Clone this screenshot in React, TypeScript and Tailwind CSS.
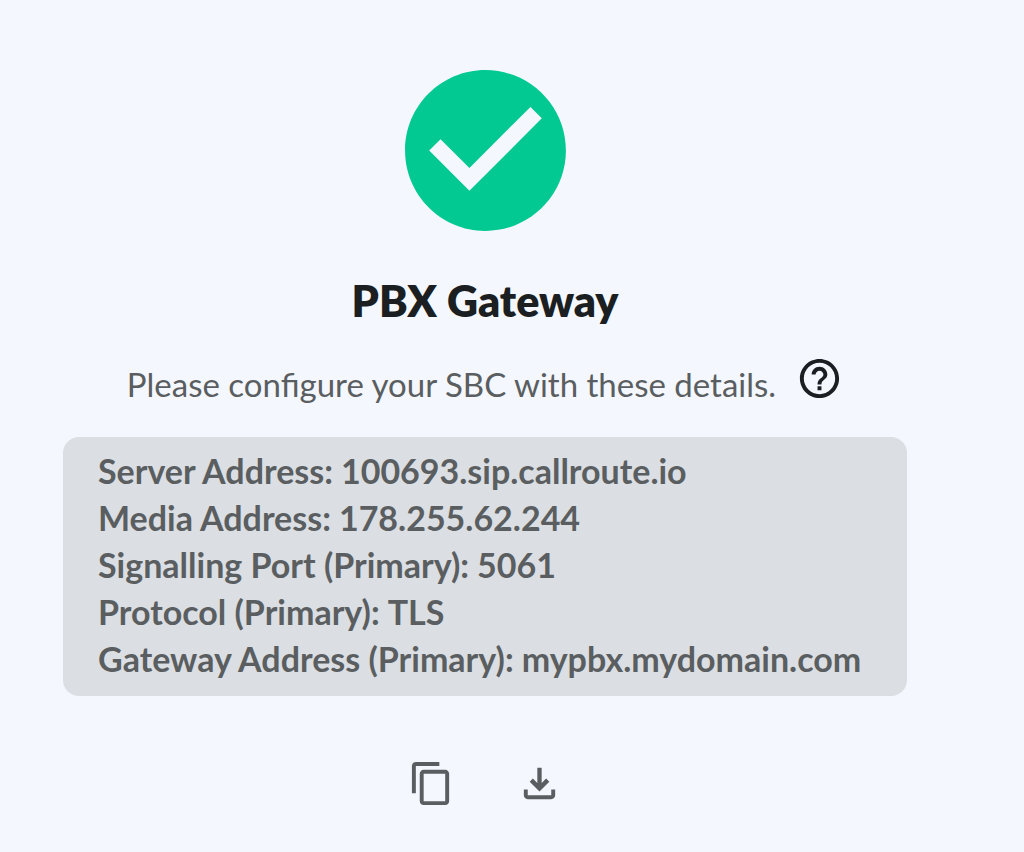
const DETAILS = [
  { label: "Server Address", value: "100693.sip.callroute.io" },
  { label: "Media Address", value: "178.255.62.244" },
  { label: "Signalling Port (Primary)", value: "5061" },
  { label: "Protocol (Primary)", value: "TLS" },
  { label: "Gateway Address (Primary)", value: "mypbx.mydomain.com" },
];

const asText = () => DETAILS.map((d) => `${d.label}: ${d.value}`).join("\n");

export default function App() {
  function copy() {
    navigator.clipboard?.writeText(asText());
  }

  function download() {
    const url = URL.createObjectURL(new Blob([asText()], { type: "text/plain" }));
    const a = document.createElement("a");
    a.href = url;
    a.download = "pbx-gateway.txt";
    a.click();
    URL.revokeObjectURL(url);
  }

  return (
    <main className="flex min-h-screen flex-col items-center bg-[#f4f7fe] pt-[54px] pr-[117px] pb-10 pl-[63px] font-['Lato',sans-serif] text-[#5a5e60]">
      <Icon className="size-[193px] text-[#02c892]" d="M12 2C6.48 2 2 6.48 2 12s4.48 10 10 10 10-4.48 10-10S17.52 2 12 2zm-2 15l-5-5 1.41-1.41L10 14.17l7.59-7.59L19 8l-9 9z" />

      <h1 className="mt-7 text-[43px] leading-[52px] font-extrabold text-[#1b1f22]">PBX Gateway</h1>

      <div className="mt-7 flex gap-5">
        <p className="pt-1.5 text-[33px] leading-[47px]">Please configure your SBC with these details.</p>
        <button aria-label="Help" className="size-[47px] text-[#1b1f22]">
          <Icon className="size-full" d="M11 18h2v-2h-2v2zm1-16C6.48 2 2 6.48 2 12s4.48 10 10 10 10-4.48 10-10S17.52 2 12 2zm0 18c-4.41 0-8-3.59-8-8s3.59-8 8-8 8 3.59 8 8-3.59 8-8 8zm0-14c-2.21 0-4 1.79-4 4h2c0-1.1.9-2 2-2s2 .9 2 2c0 2-3 1.75-3 5h2c0-2.25 3-2.5 3-5 0-2.21-1.79-4-4-4z" />
        </button>
      </div>

      <dl className="mt-[29px] w-full rounded-2xl bg-[#dbdee3] px-[35px] py-3 pt-2.5 pb-3.5 text-[34px] leading-[47px] font-bold">
        {DETAILS.map((d) => (
          <div key={d.label} className="flex flex-wrap gap-x-2">
            <dt>{d.label}:</dt>
            <dd>{d.value}</dd>
          </div>
        ))}
      </dl>

      <div className="mt-16 flex gap-[61px]">
        <button aria-label="Copy" onClick={copy} className="size-[47px]">
          <Icon className="size-full" d="M16 1H4c-1.1 0-2 .9-2 2v14h2V3h12V1zm3 4H8c-1.1 0-2 .9-2 2v14c0 1.1.9 2 2 2h11c1.1 0 2-.9 2-2V7c0-1.1-.9-2-2-2zm0 16H8V7h11v14z" />
        </button>
        <button aria-label="Download" onClick={download} className="size-[47px]">
          <Icon className="size-full" d="M12 16.1l-5-5 1.6-1.7 2.3 2.3V4h2.2v7.7l2.3-2.3L17 11.1l-5 5zM6 20c-1.1 0-2-.9-2-2v-3h2v3h12v-3h2v3c0 1.1-.9 2-2 2H6z" />
        </button>
      </div>
    </main>
  );
}

function Icon({ d, className }: { d: string; className: string }) {
  return (
    <svg viewBox="0 0 24 24" fill="currentColor" aria-hidden="true" className={className}>
      <path d={d} />
    </svg>
  );
}
